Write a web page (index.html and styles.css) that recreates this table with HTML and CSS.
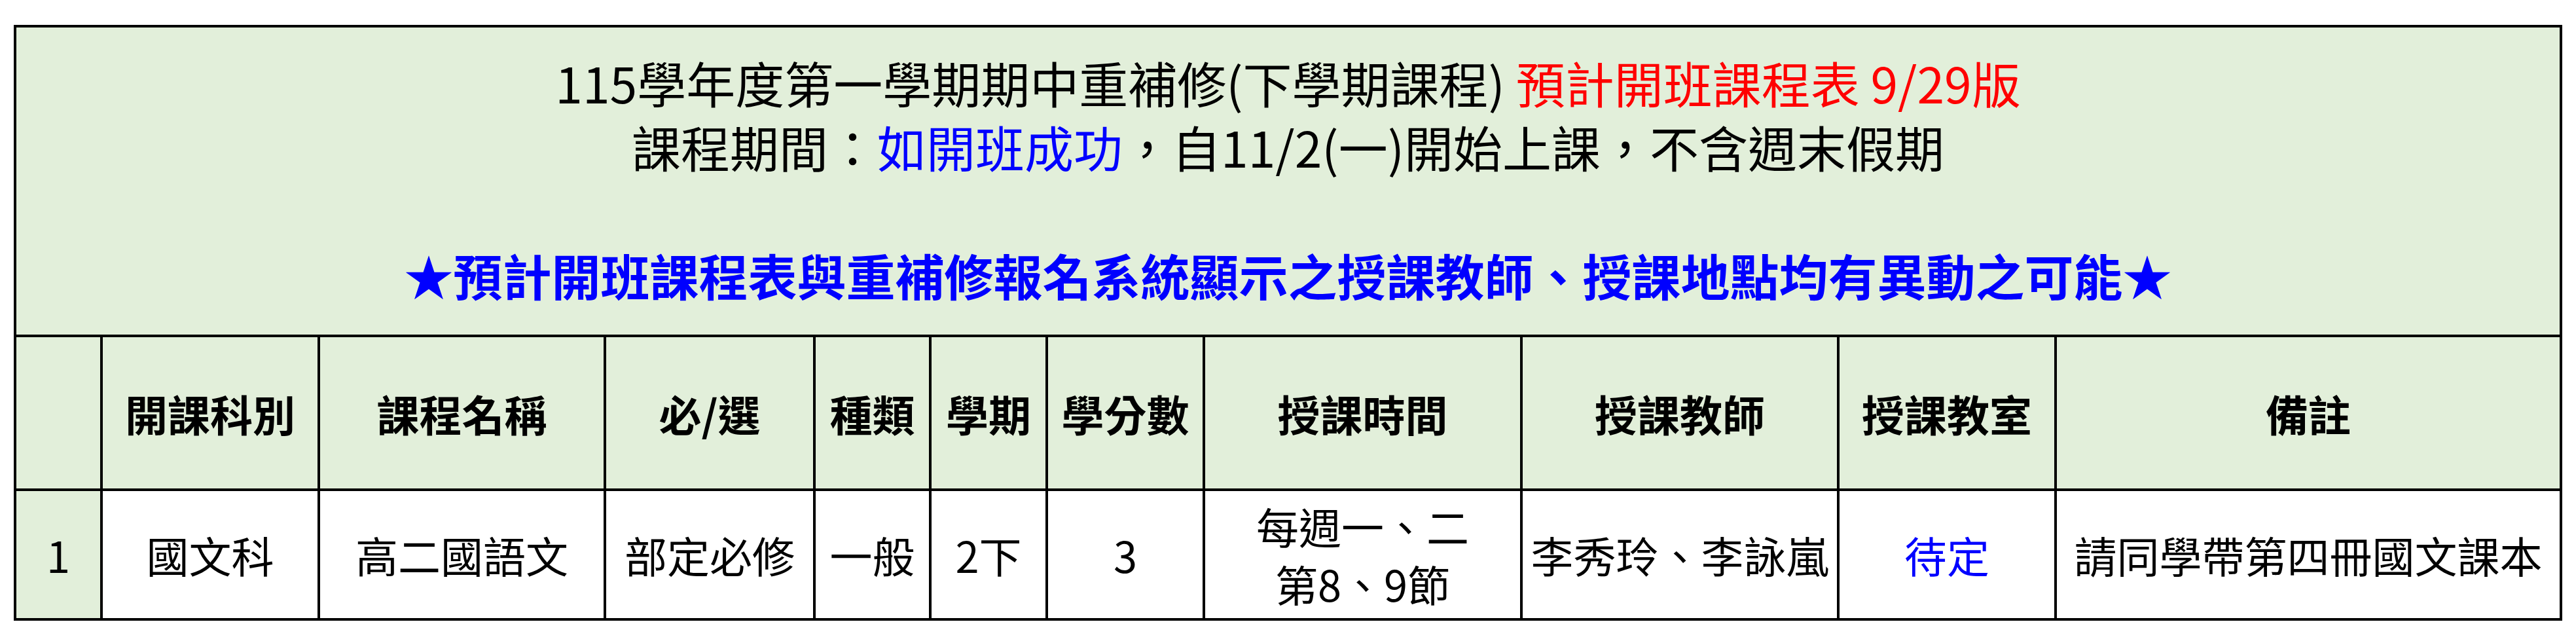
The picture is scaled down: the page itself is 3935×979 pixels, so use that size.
FILE: index.html
```html
<!DOCTYPE html>
<html lang="zh-Hant">
<head>
<meta charset="utf-8">
<title>115學年度第一學期期中重補修 預計開班課程表</title>
<link rel="stylesheet" href="styles.css">
</head>
<body>
<div class="page">
  <div class="sheet">
    <div class="cell title">
      <div class="tline">115學年度第一學期期中重補修(下學期課程) <span class="red">預計開班課程表 9/29版</span></div>
      <div class="tline">課程期間：<span class="blue">如開班成功</span>，自11/2(一)開始上課，不含週末假期</div>
      <div class="tline blank">&nbsp;</div>
      <div class="tline bold blue">★預計開班課程表與重補修報名系統顯示之授課教師、授課地點均有異動之可能★</div>
    </div>

    <div class="cell head"></div>
    <div class="cell head">開課科別</div>
    <div class="cell head">課程名稱</div>
    <div class="cell head">必/選</div>
    <div class="cell head">種類</div>
    <div class="cell head">學期</div>
    <div class="cell head">學分數</div>
    <div class="cell head">授課時間</div>
    <div class="cell head">授課教師</div>
    <div class="cell head">授課教室</div>
    <div class="cell head">備註</div>

    <div class="cell data num">1</div>
    <div class="cell data">國文科</div>
    <div class="cell data">高二國語文</div>
    <div class="cell data">部定必修</div>
    <div class="cell data">一般</div>
    <div class="cell data">2下</div>
    <div class="cell data">3</div>
    <div class="cell data multi">每週一、二<br>第8、9節</div>
    <div class="cell data">李秀玲、李詠嵐</div>
    <div class="cell data blue">待定</div>
    <div class="cell data">請同學帶第四冊國文課本</div>
  </div>
</div>
</body>
</html>
```

FILE: styles.css
```css
html, body {
  margin: 0;
  padding: 0;
  background: #ffffff;
}

body {
  font-family: "Noto Sans CJK TC", "Noto Sans CJK SC", "Noto Sans", sans-serif;
  color: #000000;
}

.page {
  padding: 38px 0 0 21px;
}

.sheet {
  width: 3893px;
  box-sizing: border-box;
  display: grid;
  grid-template-columns: 128px 328px 433px 316px 173px 174px 236px 481px 480px 328px 768px;
  grid-template-rows: 469px 231px 194px;
  gap: 4px;
  padding: 4px;
  background: #000000;
}

.cell {
  background: #e2efda;
  display: flex;
  align-items: center;
  justify-content: center;
  text-align: center;
  white-space: nowrap;
  overflow: hidden;
}

.title {
  grid-column: 1 / -1;
  flex-direction: column;
  justify-content: flex-start;
  padding-top: 35px;
  box-sizing: border-box;
}

.tline {
  font-size: 75px;
  line-height: 98px;
  height: 98px;
}

.head {
  font-size: 65px;
  font-weight: bold;
}

.data {
  background: #ffffff;
  font-size: 65px;
  line-height: 88px;
}

.data.num {
  background: #e2efda;
}

.multi {
  white-space: normal;
}

.red {
  color: #ff0000;
}

.blue {
  color: #0000ff;
}

.bold {
  font-weight: bold;
}
```
